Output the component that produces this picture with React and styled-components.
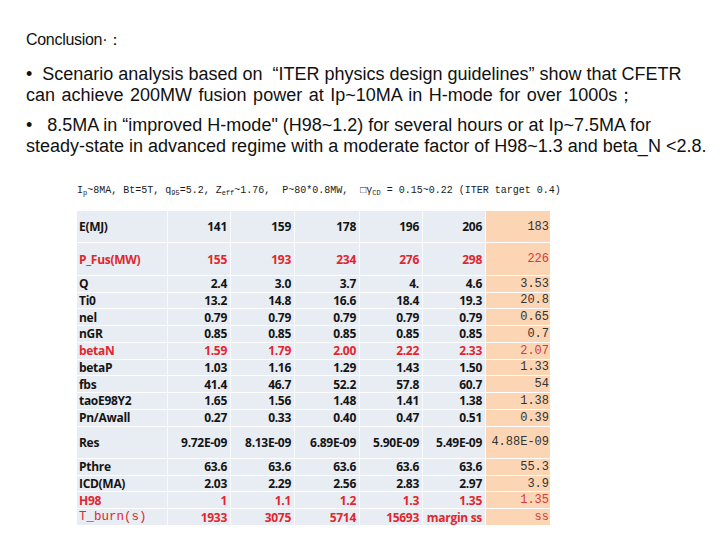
import React from "react";
import styled, { createGlobalStyle } from "styled-components";

const GlobalStyle = createGlobalStyle`
  html, body {
    margin: 0;
    padding: 0;
    background: #ffffff;
  }
  body {
    font-family: "Liberation Sans", Arial, sans-serif;
    color: #111;
  }
`;

const Page = styled.div`
  width: 720px;
  height: 540px;
  overflow: hidden;
  box-sizing: border-box;
  padding: 29px 0 0 26px;
`;

const Heading = styled.div`
  font-size: 16px;
  line-height: 21px;
  letter-spacing: -0.3px;
`;

const Bullet = styled.p`
  margin: ${(p) => (p.$first ? "14px" : "9px")} 0 0;
  font-size: 18px;
  line-height: 21px;
  white-space: nowrap;
`;

const Line = styled.span`
  display: block;
  word-spacing: ${(p) => (p.$wide ? "1.5px" : "0")};
`;

const Caption = styled.div`
  margin: 27px 0 0 51px;
  font-family: "Liberation Mono", "Noto Sans CJK SC", monospace;
  font-size: 10px;
  line-height: 14px;
  color: #1a1a1a;
  white-space: pre;

  sub {
    font-size: 7px;
    vertical-align: -2px;
    line-height: 0;
  }
`;

const Table = styled.div`
  margin: 13px 0 0 51px;
  width: 473px;
  display: grid;
  grid-template-columns: 91px 63px 64px 65px 63px 63px 64px;
`;

const Cell = styled.div`
  box-sizing: border-box;
  height: ${(p) => (p.$tall ? "32.4px" : "16.75px")};
  display: flex;
  align-items: center;
  justify-content: ${(p) => (p.$label ? "flex-start" : "flex-end")};
  padding: ${(p) => (p.$label ? "0 0 0 2px" : p.$alt ? "0 1px 0 0" : "0 3px 0 0")};
  background: ${(p) => (p.$alt ? "#fcd5b4" : "#e8ecf3")};
  border-bottom: 1.5px solid #ffffff;
  border-right: ${(p) => (p.$alt ? "0" : "1px solid rgba(255,255,255,0.75)")};
  font-family: ${(p) =>
    p.$alt || p.$mono
      ? '"Liberation Mono", "Noto Sans CJK SC", monospace'
      : '"Open Sans", "Noto Sans", sans-serif'};
  font-weight: ${(p) => (p.$alt || p.$mono ? 400 : 700)};
  font-size: ${(p) => (p.$alt ? "12px" : p.$mono ? "12.5px" : "12px")};
  letter-spacing: ${(p) => (p.$alt || p.$mono ? "0" : "-0.3px")};
  color: ${(p) =>
    p.$red ? (p.$alt ? "#d9383c" : "#e1262d") : p.$alt ? "#333333" : "#141414"};
  white-space: nowrap;
`;

const rows = [
  { label: "E(MJ)", tall: true, vals: ["141", "159", "178", "196", "206"], last: "183" },
  { label: "P_Fus(MW)", tall: true, red: true, vals: ["155", "193", "234", "276", "298"], last: "226" },
  { label: "Q", vals: ["2.4", "3.0", "3.7", "4.", "4.6"], last: "3.53" },
  { label: "Ti0", vals: ["13.2", "14.8", "16.6", "18.4", "19.3"], last: "20.8" },
  { label: "nel", vals: ["0.79", "0.79", "0.79", "0.79", "0.79"], last: "0.65" },
  { label: "nGR", vals: ["0.85", "0.85", "0.85", "0.85", "0.85"], last: "0.7" },
  { label: "betaN", red: true, vals: ["1.59", "1.79", "2.00", "2.22", "2.33"], last: "2.07" },
  { label: "betaP", vals: ["1.03", "1.16", "1.29", "1.43", "1.50"], last: "1.33" },
  { label: "fbs", vals: ["41.4", "46.7", "52.2", "57.8", "60.7"], last: "54" },
  { label: "taoE98Y2", vals: ["1.65", "1.56", "1.48", "1.41", "1.38"], last: "1.38" },
  { label: "Pn/Awall", vals: ["0.27", "0.33", "0.40", "0.47", "0.51"], last: "0.39" },
  { label: "Res", tall: true, vals: ["9.72E-09", "8.13E-09", "6.89E-09", "5.90E-09", "5.49E-09"], last: "4.88E-09" },
  { label: "Pthre", vals: ["63.6", "63.6", "63.6", "63.6", "63.6"], last: "55.3" },
  { label: "ICD(MA)", vals: ["2.03", "2.29", "2.56", "2.83", "2.97"], last: "3.9" },
  { label: "H98", red: true, vals: ["1", "1.1", "1.2", "1.3", "1.35"], last: "1.35" },
  { label: "T_burn(s)", red: true, mono: true, vals: ["1933", "3075", "5714", "15693", "margin ss"], last: "ss" },
];

export default function App() {
  return (
    <>
      <GlobalStyle />
      <Page>
        <Heading>Conclusion·：</Heading>
        <Bullet $first>
          <Line>•&nbsp; Scenario analysis based on&nbsp; “ITER physics design guidelines” show that CFETR</Line>
          <Line $wide>can achieve 200MW fusion power at Ip~10MA in H-mode for over 1000s；</Line>
        </Bullet>
        <Bullet>
          <Line>•&nbsp;&nbsp; 8.5MA in “improved H-mode" (H98~1.2) for several hours or at Ip~7.5MA for</Line>
          <Line>steady-state in advanced regime with a moderate factor of H98~1.3 and beta_N &lt;2.8.</Line>
        </Bullet>
        <Caption>
          I<sub>p</sub>~8MA, Bt=5T, q<sub>95</sub>=5.2, Z<sub>eff</sub>~1.76,  P~80*0.8MW,  □γ<sub>CD</sub> = 0.15~0.22 (ITER target 0.4)
        </Caption>
        <Table>
          {rows.map((r) => (
            <React.Fragment key={r.label}>
              <Cell $label $tall={r.tall} $red={r.red} $mono={r.mono}>
                {r.label}
              </Cell>
              {r.vals.map((v, i) => (
                <Cell key={i} $tall={r.tall} $red={r.red}>
                  {v}
                </Cell>
              ))}
              <Cell $alt $tall={r.tall} $red={r.red}>
                {r.last}
              </Cell>
            </React.Fragment>
          ))}
        </Table>
      </Page>
    </>
  );
}
